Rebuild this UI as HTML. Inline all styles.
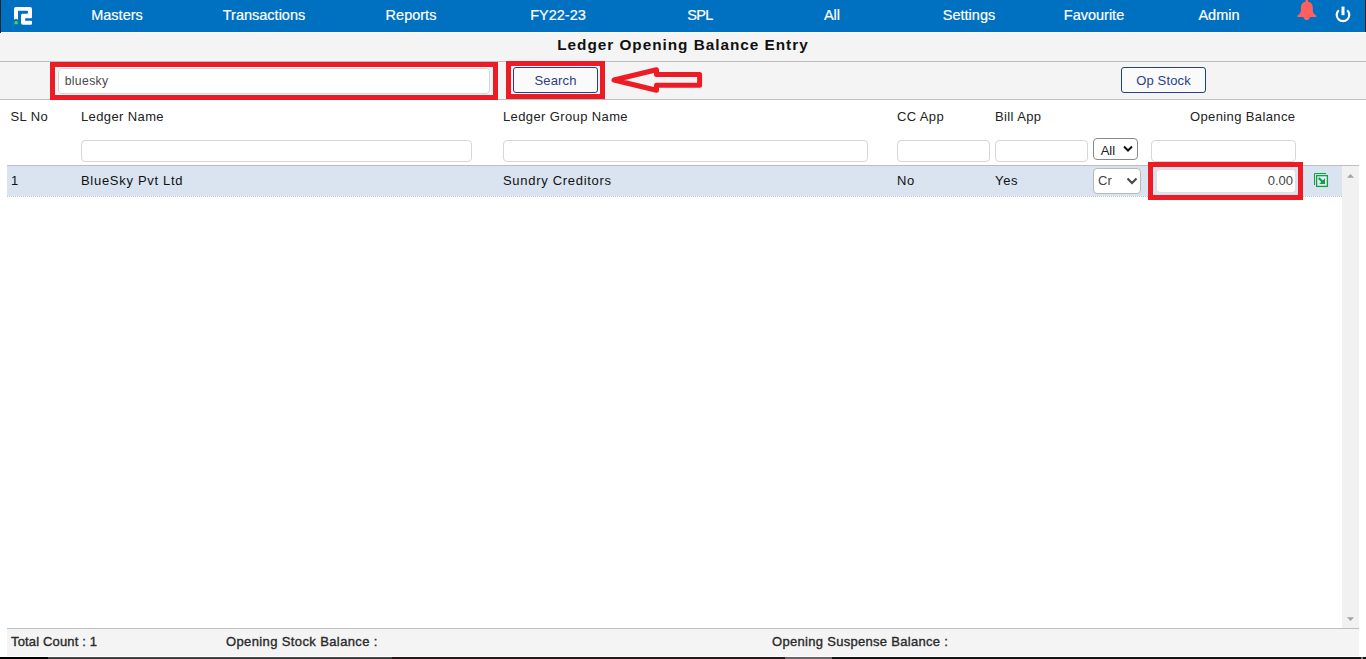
<!DOCTYPE html>
<html><head><meta charset="utf-8">
<style>
*{box-sizing:border-box;margin:0;padding:0}
html,body{width:1366px;height:659px;overflow:hidden;background:#fff;font-family:"Liberation Sans",sans-serif;color:#222}
.abs{position:absolute}
#nav{left:0;top:0;width:1366px;height:32px;background:#0070c0}
.ni{position:absolute;top:6px;color:#fff;-webkit-text-stroke:0.2px #fff;font-size:14.5px;line-height:18px;white-space:nowrap;transform:translateX(-50%)}
#band1{left:0;top:33px;width:1366px;height:28px;background:#f4f4f4}
#title{left:0;top:36px;width:1366px;text-align:center;font-weight:bold;font-size:14px;line-height:18px;letter-spacing:0.9px;color:#111;transform:scaleX(1.094);transform-origin:683.5px 0}
#line1{left:0;top:61px;width:1366px;height:1px;background:#bdbdbd}
#band2{left:0;top:62px;width:1366px;height:37px;background:#f4f4f4}
#line2{left:0;top:99px;width:1366px;height:1px;background:#bdbdbd}
.red{border:5px solid #ed1c24}
.inp{background:#fff;border:1px solid #d6d6d6;border-radius:4px}
.btn{background:#fafafa;border:1.500px solid #243f87;border-radius:3px;color:#2a3f86;font-size:13px;text-align:center;line-height:25px;letter-spacing:0.15px}
.th{position:absolute;top:109px;font-size:13px;line-height:16px;color:#222;letter-spacing:0.38px;white-space:nowrap}
.td{position:absolute;top:173px;font-size:13px;line-height:16px;color:#111;letter-spacing:0.7px;white-space:nowrap}
.ft{position:absolute;top:634px;font-size:13px;line-height:16px;color:#2a2a2a;letter-spacing:0.3px;white-space:nowrap;-webkit-text-stroke:0.350px #2a2a2a}
</style></head><body>
<div class="abs" id="nav"></div>
<div class="abs" style="left:0;top:0;width:1px;height:33px;background:#22262a"></div>
<svg class="abs" style="left:14px;top:7px" width="19" height="18" viewBox="0 0 19 18"><path d="M0 2 Q0 0 2 0 H16 Q18 0 18 2 V10.300 Q18 11.300 17 11.300 H11.200 V13.700 H17 Q18 13.700 18 14.700 V16.700 Q18 17.700 17 17.700 H9 Q7 17.700 7 15.700 V8.300 Q7 6.800 8.500 6.800 H13 Q14 6.800 14 5.800 V4.800 Q14 3.800 13 3.800 H4 V12.850 L2 11.800 L0 12.850 Z" fill="#fff"/><circle cx="2.100" cy="15.800" r="1.800" fill="#3fe03a"/></svg>
<div class="ni" style="left:117px">Masters</div>
<div class="ni" style="left:264px">Transactions</div>
<div class="ni" style="left:411px">Reports</div>
<div class="ni" style="left:558px">FY22-23</div>
<div class="ni" style="left:700px;letter-spacing:-0.7px">SPL</div>
<div class="ni" style="left:832px">All</div>
<div class="ni" style="left:969px">Settings</div>
<div class="ni" style="left:1094px">Favourite</div>
<div class="ni" style="left:1219px">Admin</div>
<svg class="abs" style="left:1296px;top:0" width="22" height="21" viewBox="0 0 22 21"><path d="M9.600 0 H12 V1.600 C15 2.200 16.800 4.500 16.800 7.500 V10.500 C16.800 13 18.500 14.500 20.400 15.800 V16.900 H14 C13.600 18.800 12.400 20 10.700 20 C9 20 7.800 18.800 7.400 16.900 H1.200 V15.800 C3 14.500 4.900 13 4.900 10.500 V7.500 C4.900 4.500 6.600 2.200 9.600 1.600 Z" fill="#ff5f5f"/></svg>
<svg class="abs" style="left:1334.300px;top:6.300px" width="18" height="18" viewBox="0 0 18 18"><path d="M4.800 4.200 A6.300 6.300 0 1 0 13.200 4.200" fill="none" stroke="#fff" stroke-width="2.200"/><rect x="7.500" y="0.600" width="3" height="8.600" fill="#fff"/></svg>
<div class="abs" style="left:1365px;top:0;width:1px;height:32px;background:#22262a"></div>

<div class="abs" id="band1"></div>
<div class="abs" id="title">Ledger Opening Balance Entry</div>
<div class="abs" id="line1"></div>
<div class="abs" id="band2"></div>
<div class="abs" id="line2"></div>

<div class="abs red" style="left:50px;top:62px;width:448px;height:38px"></div>
<div class="abs inp" style="left:58px;top:68px;width:432px;height:26px"></div>
<div class="abs" style="left:64.700px;top:73px;font-size:12.200px;line-height:16px;color:#484848;letter-spacing:0.35px">bluesky</div>

<div class="abs red" style="left:506px;top:61px;width:99px;height:38px"></div>
<div class="abs btn" style="left:513px;top:67px;width:85px;height:26px">Search</div>
<svg class="abs" style="left:608px;top:66px" width="98" height="28" viewBox="0 0 98 28"><path d="M6 14 L48.500 3.800 V8.600 H91.600 V19.300 H48.500 V24.200 Z" fill="none" stroke="#ed1c24" stroke-width="5" stroke-linejoin="round"/></svg>
<div class="abs btn" style="left:1121px;top:67px;width:85px;height:26px">Op Stock</div>

<div class="th" style="left:10.500px">SL No</div>
<div class="th" style="left:81px">Ledger Name</div>
<div class="th" style="left:503px">Ledger Group Name</div>
<div class="th" style="left:897px">CC App</div>
<div class="th" style="left:995px">Bill App</div>
<div class="th" style="left:1190px">Opening Balance</div>

<div class="abs inp" style="left:81px;top:140px;width:391px;height:22px"></div>
<div class="abs inp" style="left:503px;top:140px;width:365px;height:22px"></div>
<div class="abs inp" style="left:897px;top:140px;width:93px;height:22px"></div>
<div class="abs inp" style="left:995px;top:140px;width:93px;height:22px"></div>
<div class="abs inp" style="left:1151px;top:140px;width:145px;height:22px"></div>
<div class="abs" style="left:1093px;top:138px;width:45px;height:22px;background:#fff;border:1px solid #8a8a8a;border-radius:4px"></div>
<div class="abs" style="left:1100.700px;top:142.700px;font-size:13px;line-height:16px;color:#222">All</div>
<svg class="abs" style="left:1123px;top:145px" width="10" height="8" viewBox="0 0 10 8"><path d="M1 1.500 L5 5.500 L9 1.500" fill="none" stroke="#111" stroke-width="2"/></svg>

<div class="abs" style="left:7px;top:165px;width:1352px;height:1px;background:#bdbdbd"></div>
<div class="abs" style="left:7px;top:166px;width:1335px;height:30px;background:#d9e4f0"></div>
<div class="abs" style="left:7px;top:196px;width:1335px;height:0;border-top:1px dotted #a9c6d9"></div>
<div class="td" style="left:11px">1</div>
<div class="td" style="left:81px">BlueSky Pvt Ltd</div>
<div class="td" style="left:503px">Sundry Creditors</div>
<div class="td" style="left:897px">No</div>
<div class="td" style="left:995px">Yes</div>
<div class="abs" style="left:1093px;top:168px;width:48px;height:26px;background:#fff;border:1px solid #b8b8b8;border-radius:4px"></div>
<div class="abs" style="left:1098px;top:173px;font-size:13px;line-height:16px;color:#444">Cr</div>
<svg class="abs" style="left:1126px;top:177px" width="12" height="8" viewBox="0 0 12 8"><path d="M1.500 1.500 L6 6 L10.500 1.500" fill="none" stroke="#444" stroke-width="2"/></svg>

<div class="abs red" style="left:1148px;top:162px;width:155px;height:38px"></div>
<div class="abs inp" style="left:1156px;top:169px;width:140px;height:24px;border-color:#e0e0e0"></div>
<div class="abs" style="left:1200px;top:173px;width:93px;text-align:right;font-size:13px;line-height:16px;color:#444">0.00</div>

<svg class="abs" style="left:1313px;top:172px" width="17" height="17" viewBox="0 0 17 17"><path d="M1.500 13 V1.500 H13" fill="none" stroke="#10a040" stroke-width="1"/><rect x="3.600" y="3.600" width="10.800" height="10.800" fill="#e6e8f8" stroke="#10a040" stroke-width="1.300"/><path d="M12 6.200 V12 H6.200 Z" fill="#10a040"/><path d="M5.700 6 L9.600 9.700" stroke="#10a040" stroke-width="2.200" fill="none"/></svg>

<div class="abs" style="left:1342px;top:166px;width:17px;height:462px;background:#f1f1f1"></div>
<svg class="abs" style="left:1347px;top:173.500px" width="7" height="4" viewBox="0 0 7 4"><path d="M0 3.700 L3.500 0 L7 3.700 Z" fill="#a3a3a3"/></svg>
<svg class="abs" style="left:1347px;top:617px" width="7" height="4" viewBox="0 0 7 4"><path d="M0 0.300 L3.500 4 L7 0.300 Z" fill="#a3a3a3"/></svg>

<div class="abs" style="left:7px;top:628px;width:1352px;height:1px;background:#bdbdbd"></div>
<div class="abs" style="left:7px;top:629px;width:1352px;height:27px;background:#f4f4f4"></div>
<div class="ft" style="left:11px;letter-spacing:0.15px">Total Count : 1</div>
<div class="ft" style="left:226px;letter-spacing:0.38px">Opening Stock Balance :</div>
<div class="ft" style="left:772px">Opening Suspense Balance :</div>
<div class="abs" style="left:0;top:657px;width:1366px;height:2px;background:#161616"></div>
<div class="abs" style="left:0;top:657px;width:48px;height:2px;background:#000"></div>
<div class="abs" style="left:48px;top:657px;width:344px;height:2px;background:linear-gradient(#555,#2a2a2a)"></div>
<div class="abs" style="left:392px;top:657px;width:393px;height:2px;background:#2a161b"></div>
<div class="abs" style="left:785px;top:657px;width:47px;height:2px;background:#6a6265"></div>
<div class="abs" style="left:1361px;top:657px;width:2px;height:2px;background:#777"></div>
</body></html>
